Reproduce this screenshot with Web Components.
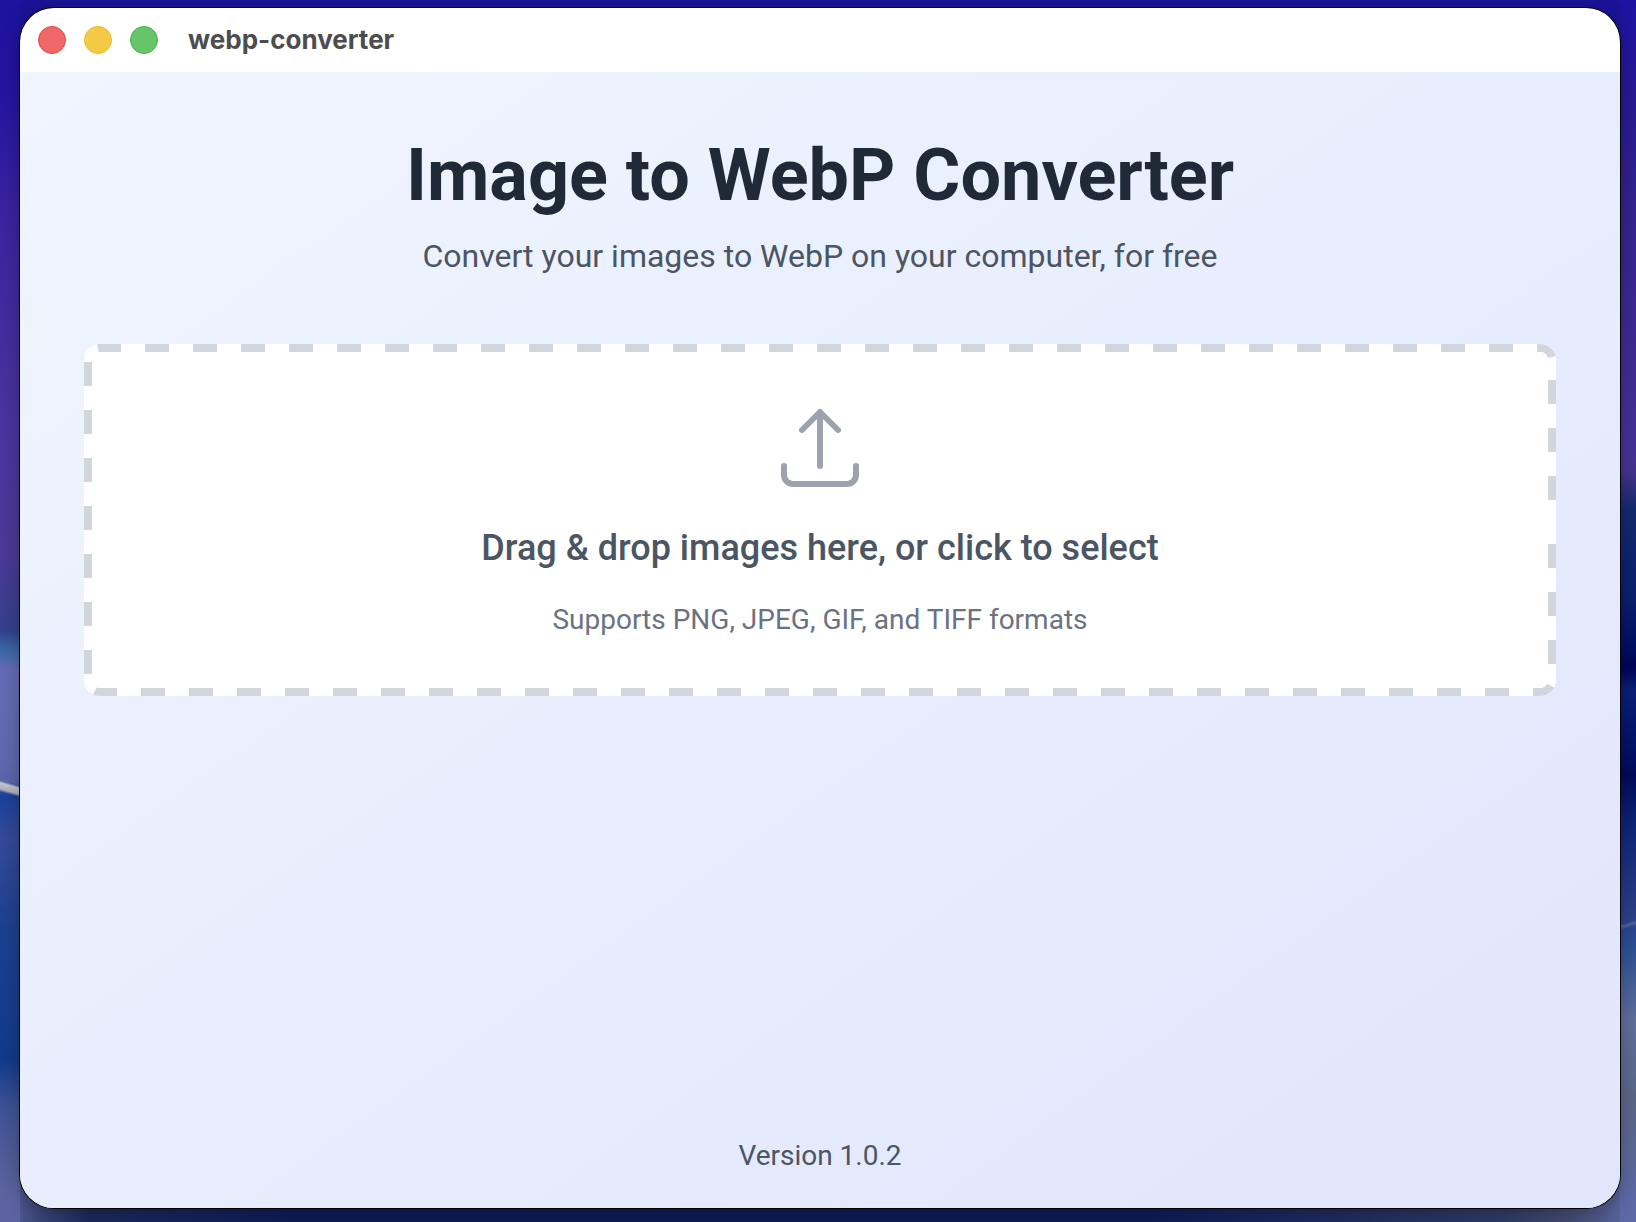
<!DOCTYPE html>
<html lang="en">
<head>
<meta charset="utf-8">
<meta name="viewport" content="width=device-width, initial-scale=1">
<title>webp-converter</title>
<style>
  body { margin: 0; font-family: Roboto, "Liberation Sans", sans-serif; }
</style>
</head>
<body>
<desk-top>
  <app-window heading="webp-converter">
    <page-header>
      <span slot="title">Image to WebP Converter</span>
      <span slot="subtitle">Convert your images to WebP on your computer, for free</span>
    </page-header>
    <drop-zone>
      <span slot="label">Drag &amp; drop images here, or click to select</span>
      <span slot="hint">Supports PNG, JPEG, GIF, and TIFF formats</span>
    </drop-zone>
    <app-version slot="footer">Version 1.0.2</app-version>
  </app-window>
</desk-top>

<script>
class BaseElement extends HTMLElement {
  constructor() {
    super();
    this.attachShadow({ mode: 'open' }).innerHTML = this.constructor.markup;
  }
}

/* Wallpaper behind the window */
customElements.define('desk-top', class extends BaseElement {
  static markup = `
    <style>
      :host {
        display: flex;
        box-sizing: border-box;
        min-height: 100vh;
        padding: 8px 16px 14px 20px;
        background:
          linear-gradient(16deg, transparent 28%, #b0b0b9 38%, #c6c6ce 58%, transparent 66%) 0 776px / 20px 24px no-repeat,
          linear-gradient(164deg, transparent 36%, #56639b 50%, transparent 64%) 100% 916px / 16px 18px no-repeat,
          linear-gradient(#1d139f 0, #2414a0 90px, #3b249f 220px, #4b36a0 440px, #4a3a96 560px, #35408c 630px, #3a68a4 650px, #656cb6 670px, #6069b0 760px, #5a66a8 782px, #1b419c 796px, #354a98 840px, #1c4090 930px, #123b8c 1060px, #3f5494 1110px, #5c639f 1190px) 0 0 / 20px 100% no-repeat,
          linear-gradient(#1c13a3 0, #2a1a92 110px, #35248f 220px, #463298 450px, #47348f 470px, #14296f 510px, #0a1f70 600px, #000e62 650px, #000459 667px, #0a1f78 690px, #000f66 760px, #000b5a 775px, #0c2376 820px, #2c3e88 910px, #2b4f94 945px, #60709c 1020px, #5c6788 1100px, #5d69a6 1200px) 100% 0 / 16px 100% no-repeat,
          linear-gradient(90deg, #5c639f 0, #3c4678 40px, #1c2a5c 90px, #0d1c58 300px, #0d1c58 70%, #303b66 92%, #444d72 96%, #5d69a6 100%) 0 100% / 100% 56px no-repeat,
          #1b1398;
      }
      ::slotted(*) { flex: 1; min-width: 0; }
    </style>
    <slot></slot>`;
});

customElements.define('app-window', class extends BaseElement {
  static markup = `
    <style>
      :host {
        display: flex;
        flex-direction: column;
        border-radius: 34px;
        overflow: hidden;
        background: #fff;
        box-shadow: 0 0 0 1px #000, 0 4px 20px rgba(0, 0, 0, .3);
      }
      header {
        display: flex;
        align-items: center;
        gap: 30px;
        height: 64px;
        padding: 0 18px;
        box-sizing: border-box;
      }
      .lights { display: flex; gap: 18px; }
      .lights button {
        width: 28px;
        height: 28px;
        padding: 0;
        border: 1px solid var(--edge);
        border-radius: 50%;
        background: var(--fill);
      }
      .close { --fill: #ed6866; --edge: #e64444; }
      .minimize { --fill: #f4c946; --edge: #eebb1c; }
      .zoom { --fill: #66c568; --edge: #3eb543; }
      .name {
        font: 700 26px/32px Inter, "Liberation Sans", sans-serif;
        color: #4d4d4d;
      }
      .content {
        flex: 1;
        display: flex;
        flex-direction: column;
        gap: 64px;
        padding: 64px 64px 32px;
        background: linear-gradient(to bottom right, #f0f5ff, #e0e6fc);
      }
      footer { margin-top: auto; }
    </style>
    <header>
      <div class="lights">
        <button class="close" type="button" aria-label="Close"></button>
        <button class="minimize" type="button" aria-label="Minimize"></button>
        <button class="zoom" type="button" aria-label="Zoom"></button>
      </div>
      <div class="name"></div>
    </header>
    <main class="content">
      <slot></slot>
      <footer><slot name="footer"></slot></footer>
    </main>`;
  connectedCallback() {
    this.shadowRoot.querySelector('.name').textContent = this.getAttribute('heading');
  }
});

customElements.define('page-header', class extends BaseElement {
  static markup = `
    <style>
      :host { display: block; text-align: center; }
      h1 { margin: 0 0 16px; font-size: 72px; line-height: 80px; font-weight: 700; color: #1f2937; }
      p { margin: 0; font-size: 32px; line-height: 48px; color: #4b5563; }
    </style>
    <h1><slot name="title"></slot></h1>
    <p><slot name="subtitle"></slot></p>`;
});

/* White card with a dashed frame that runs as one line around its edge */
customElements.define('drop-zone', class extends BaseElement {
  static markup = `
    <style>
      :host { display: block; }
      button {
        display: grid;
        width: 100%;
        padding: 0;
        border: 0;
        border-radius: 16px;
        overflow: hidden;
        background: #fff;
        font: inherit;
        cursor: pointer;
      }
      .frame, .body { grid-area: 1 / 1; min-width: 0; }
      .frame { width: 100%; height: 100%; min-height: 0; contain: size; }
      .frame path { fill: none; stroke: #d1d5dc; stroke-width: 16; stroke-dasharray: 24; stroke-dashoffset: 24; }
      .frame rect { fill: #fff; }
      .body {
        display: flex;
        flex-direction: column;
        align-items: center;
        gap: 24px;
        padding: 56px;
      }
      .icon { width: 96px; height: 96px; fill: none; stroke: #9ca3af; stroke-width: 1.5; stroke-linecap: round; stroke-linejoin: round; }
      .label { font-size: 36px; line-height: 56px; font-weight: 500; color: #4b5563; }
      .hint { font-size: 28px; line-height: 40px; color: #6b7280; }
    </style>
    <button type="button">
      <svg class="frame" aria-hidden="true"><path/><rect x="8" y="8" rx="8"/></svg>
      <span class="body">
        <svg class="icon" viewBox="0 0 24 24" aria-hidden="true">
          <path d="M3 16.5v2.25A2.25 2.25 0 0 0 5.25 21h13.5A2.25 2.25 0 0 0 21 18.75V16.5m-13.5-9L12 3m0 0 4.5 4.5M12 3v13.5"/>
        </svg>
        <span class="label"><slot name="label"></slot></span>
        <span class="hint"><slot name="hint"></slot></span>
      </span>
    </button>
    <input type="file" accept="image/png,image/jpeg,image/gif,image/tiff" aria-label="Images" multiple hidden>`;
  connectedCallback() {
    const button = this.shadowRoot.querySelector('button');
    const input = this.shadowRoot.querySelector('input');
    button.addEventListener('click', () => input.click());
    this.drawFrame();
    new ResizeObserver(() => this.drawFrame()).observe(button);
  }
  drawFrame() {
    const button = this.shadowRoot.querySelector('button');
    const w = button.clientWidth, h = button.clientHeight, r = 16;
    if (!w || !h) return;
    const arc = (x, y) => `A${r} ${r} 0 0 1 ${x} ${y}`;
    this.shadowRoot.querySelector('.frame path').setAttribute('d',
      `M${w} ${h / 2}V${h - r}${arc(w - r, h)}H${r}${arc(0, h - r)}V${r}${arc(r, 0)}H${w - r}${arc(w, r)}V${h / 2}`);
    const inner = this.shadowRoot.querySelector('.frame rect');
    inner.setAttribute('width', w - 16);
    inner.setAttribute('height', h - 16);
  }
});

customElements.define('app-version', class extends BaseElement {
  static markup = `
    <style>
      :host { display: block; text-align: center; font-size: 28px; line-height: 40px; color: #4b5563; }
    </style>
    <slot></slot>`;
});
</script>
</body>
</html>
